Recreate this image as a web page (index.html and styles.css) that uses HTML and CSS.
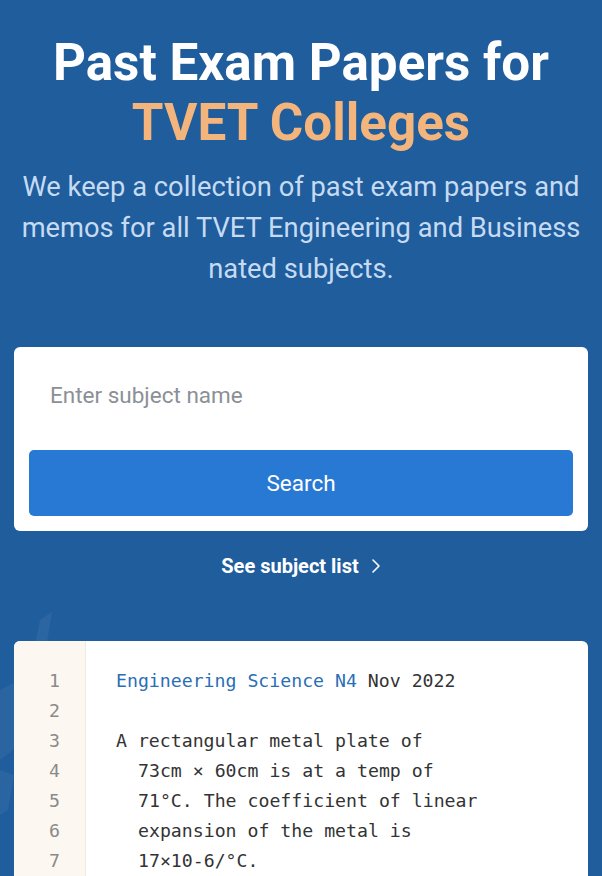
FILE: index.html
```html
<!DOCTYPE html>
<html lang="en">
<head>
<meta charset="utf-8">
<title>Past Exam Papers for TVET Colleges</title>
<link rel="stylesheet" href="styles.css">
</head>
<body>
<main class="page">
  <svg class="deco" width="90" height="240" viewBox="0 0 90 240" aria-hidden="true">
    <path d="M40 20 L52 12 L44 60 L30 70 Z" fill="#ffffff" opacity="0.06"/>
    <path d="M0 90 L20 80 L26 140 L0 160 Z" fill="#ffffff" opacity="0.05"/>
    <path d="M0 170 L14 175 L8 210 L0 215 Z" fill="#ffffff" opacity="0.05"/>
  </svg>
  <header class="hero">
    <h1 class="title">Past Exam Papers for <span class="accent">TVET Colleges</span></h1>
    <p class="lead">We keep a collection of past exam papers and memos for all TVET Engineering and Business nated subjects.</p>
  </header>

  <form class="search-card">
    <input class="search-input" type="text" placeholder="Enter subject name">
    <button class="search-btn" type="button">Search</button>
  </form>

  <a class="subject-link" href="#">See subject list
    <svg class="chev" width="10" height="16" viewBox="0 0 10 16" aria-hidden="true"><path d="M2 2 L8 8 L2 14" fill="none" stroke="#ffffff" stroke-width="1.6" stroke-linecap="round" stroke-linejoin="round"/></svg>
  </a>

  <section class="code-card">
    <div class="gutter">
      <div>1</div><div>2</div><div>3</div><div>4</div><div>5</div><div>6</div><div>7</div><div>&nbsp;</div>
    </div>
    <div class="code">
      <div class="ln"><span class="kw">Engineering Science N4</span> Nov 2022</div>
      <div class="ln">&nbsp;</div>
      <div class="ln">A rectangular metal plate of</div>
      <div class="ln cont">73cm × 60cm is at a temp of</div>
      <div class="ln cont">71°C. The coefficient of linear</div>
      <div class="ln cont">expansion of the metal is</div>
      <div class="ln cont">17×10-6/°C.</div>
      <div class="ln">&nbsp;</div>
    </div>
  </section>
</main>
</body>
</html>
```

FILE: styles.css
```css
* { box-sizing: border-box; }

html, body {
  margin: 0;
  padding: 0;
  background: #1f5d9d;
}

body {
  font-family: Roboto, "Liberation Sans", Arial, sans-serif;
  color: #ffffff;
}

.page {
  position: relative;
  padding: 33px 14px 0;
  overflow: hidden;
  height: 876px;
}

.deco {
  position: absolute;
  left: 0;
  top: 600px;
}

.hero {
  position: relative;
  text-align: center;
}

.title {
  margin: 0;
  font-size: 51.2px;
  line-height: 60px;
  font-weight: 700;
  color: #ffffff;
}

.accent {
  display: block;
  color: #f4b57c;
}

.lead {
  margin: 14px -6px 0;
  font-size: 27.3px;
  line-height: 41px;
  color: #c6dbf2;
}

.search-card {
  position: relative;
  margin-top: 57px;
  background: #ffffff;
  border-radius: 6px;
  padding: 15px;
  display: flex;
  flex-direction: column;
  gap: 22px;
}

.search-input {
  height: 66px;
  border: none;
  outline: none;
  padding: 0 21px;
  font-family: Roboto, "Liberation Sans", Arial, sans-serif;
  font-size: 22.5px;
  color: #333;
  background: #ffffff;
}

.search-input::placeholder {
  color: #8b9096;
}

.search-btn {
  height: 66px;
  border: none;
  border-radius: 5px;
  background: #2779d3;
  color: #ffffff;
  font-family: Roboto, "Liberation Sans", Arial, sans-serif;
  font-size: 22.5px;
}

.subject-link {
  position: relative;
  display: flex;
  align-items: center;
  justify-content: center;
  gap: 12px;
  height: 70px;
  color: #ffffff;
  text-decoration: none;
  font-size: 20px;
  font-weight: 700;
}

.code-card {
  position: relative;
  margin-top: 40px;
  background: #ffffff;
  border-radius: 6px 6px 0 0;
  display: flex;
  overflow: hidden;
  font-family: "DejaVu Sans Mono", "Liberation Mono", monospace;
  font-size: 18.2px;
  line-height: 30px;
}

.gutter {
  width: 72px;
  flex: none;
  background: #fcf7f1;
  border-right: 1px solid #f1ebe4;
  color: #8a8a8a;
  text-align: center;
  padding: 25px 0 20px 10px;
}

.code {
  padding: 25px 10px 20px 30px;
  color: #333333;
}

.ln { white-space: pre; }

.code .cont { padding-left: 22px; }

.kw { color: #2a6eb6; }
```
